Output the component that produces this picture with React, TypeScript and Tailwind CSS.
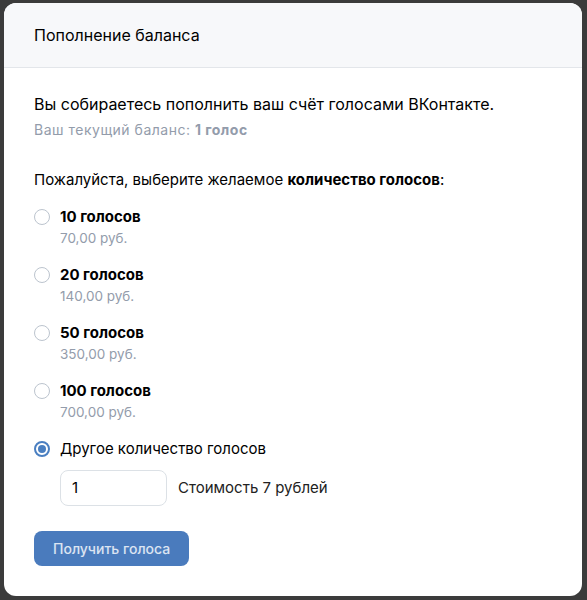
import React from "react";

const options = [
  { label: "10 голосов", price: "70,00 руб." },
  { label: "20 голосов", price: "140,00 руб." },
  { label: "50 голосов", price: "350,00 руб." },
  { label: "100 голосов", price: "700,00 руб." },
];

function Radio({ checked }: { checked?: boolean }) {
  return checked ? (
    <div className="w-4 h-4 rounded-full border-2 border-[#4a7fc1] flex items-center justify-center shrink-0">
      <div className="w-2 h-2 rounded-full bg-[#4a7fc1]" />
    </div>
  ) : (
    <div className="w-4 h-4 rounded-full border-[1.5px] border-[#bcc4ce] shrink-0" />
  );
}

export default function App() {
  return (
    <div
      className="w-[587px] h-[600px] bg-[#3b3b3b] pt-[3px] pl-[4px] pr-[5px] pb-[4px]"
      style={{ fontFamily: "Inter, Roboto, 'Noto Sans', sans-serif" }}
    >
      <div className="w-full h-full bg-white rounded-[12px] overflow-hidden flex flex-col">
        <div className="h-[65px] bg-[#f7f8fa] border-b border-[#e3e6ea] flex items-center px-[30px] shrink-0">
          <span className="text-[16px] text-[#000000]">Пополнение баланса</span>
        </div>
        <div className="px-[30px] pt-[26px]">
          <div className="text-[16px] leading-[20px] text-black">
            Вы собираетесь пополнить ваш счёт голосами ВКонтакте.
          </div>
          <div className="text-[14px] leading-[18px] mt-[7px] tracking-[0.5px] text-[#939cab]">
            Ваш текущий баланс: <b className="font-bold">1 голос</b>
          </div>
          <div className="text-[15px] leading-[18px] mt-[32px] text-black">
            Пожалуйста, выберите желаемое <b className="font-bold">количество голосов</b>:
          </div>
          <div className="mt-[19px] flex flex-col gap-[19px]">
            {options.map((o) => (
              <div key={o.label} className="flex items-start gap-[10px]">
                <div className="pt-[1px]">
                  <Radio />
                </div>
                <div>
                  <div className="text-[15px] leading-[18px] font-bold text-black">{o.label}</div>
                  <div className="text-[13.5px] leading-[18px] mt-[3px] text-[#939cab]">{o.price}</div>
                </div>
              </div>
            ))}
            <div className="flex items-start gap-[10px]">
              <div className="pt-[1px]">
                <Radio checked />
              </div>
              <div className="text-[15px] leading-[18px] text-black">Другое количество голосов</div>
            </div>
          </div>
          <div className="flex items-center gap-[11px] mt-[12px] ml-[26px]">
            <div className="w-[107px] h-[36px] border border-[#dce1e6] rounded-[8px] flex items-center px-[11px] text-[15px] text-black">
              1
            </div>
            <span className="text-[15px] text-[#222222]">Стоимость 7 рублей</span>
          </div>
          <button className="mt-[25px] h-[35px] px-[19px] rounded-[8px] bg-[#4a7bbd] text-[14px] font-medium text-white/80">
            Получить голоса
          </button>
        </div>
      </div>
    </div>
  );
}
